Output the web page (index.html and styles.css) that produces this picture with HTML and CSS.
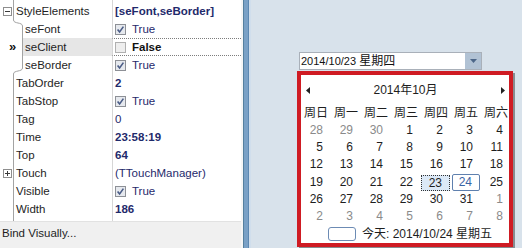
FILE: index.html
```html
<!DOCTYPE html>
<html>
<head>
<meta charset="utf-8">
<link rel="stylesheet" href="styles.css">
</head>
<body>
<div class="app">
  <div class="inspector">
    <div class="grid">
      <div class="row first">
        <div class="gutter"><svg class="exp" width="9" height="9" viewBox="0 0 9 9"><rect x=".5" y=".5" width="8" height="8" fill="#fff" stroke="#8e8e8e"/><path d="M2 4.5H7" stroke="#3a3a3a"/></svg></div>
        <div class="name">StyleElements</div>
        <div class="value bold">[seFont,seBorder]</div>
      </div>
      <div class="group">
        <div class="group-gutter">
          <svg class="bracket" width="23" height="54" viewBox="0 0 23 54"><path d="M13.5 0C13.5 4 22.5 2 22.5 6V48C22.5 52 13.5 50 13.5 54" fill="none" stroke="#a3a3a3"/></svg>
          <div class="markers"><span></span><span class="marker">»</span><span></span></div>
        </div>
        <div class="group-rows">
          <div class="row sub">
            <div class="name">seFont</div>
            <div class="value"><svg class="cb" width="11" height="11" viewBox="0 0 11 11"><rect x=".5" y=".5" width="10" height="10" fill="#e6e9ee" stroke="#8d9096"/><path d="M2.6 5.4L4.6 8L8.4 2.6" fill="none" stroke="#4a5c86" stroke-width="1.6"/></svg>True</div>
          </div>
          <div class="row sub selected">
            <div class="name">seClient</div>
            <div class="value plain-black bold"><svg class="cb" width="11" height="11" viewBox="0 0 11 11"><rect x=".5" y=".5" width="10" height="10" fill="#eeeeee" stroke="#b0b0b0"/></svg>False</div>
          </div>
          <div class="row sub">
            <div class="name">seBorder</div>
            <div class="value"><svg class="cb" width="11" height="11" viewBox="0 0 11 11"><rect x=".5" y=".5" width="10" height="10" fill="#e6e9ee" stroke="#8d9096"/><path d="M2.6 5.4L4.6 8L8.4 2.6" fill="none" stroke="#4a5c86" stroke-width="1.6"/></svg>True</div>
          </div>
        </div>
      </div>
      <div class="row">
        <div class="gutter"></div>
        <div class="name">TabOrder</div>
        <div class="value bold">2</div>
      </div>
      <div class="row">
        <div class="gutter"></div>
        <div class="name">TabStop</div>
        <div class="value"><svg class="cb" width="11" height="11" viewBox="0 0 11 11"><rect x=".5" y=".5" width="10" height="10" fill="#e6e9ee" stroke="#8d9096"/><path d="M2.6 5.4L4.6 8L8.4 2.6" fill="none" stroke="#4a5c86" stroke-width="1.6"/></svg>True</div>
      </div>
      <div class="row">
        <div class="gutter"></div>
        <div class="name">Tag</div>
        <div class="value">0</div>
      </div>
      <div class="row">
        <div class="gutter"></div>
        <div class="name">Time</div>
        <div class="value bold">23:58:19</div>
      </div>
      <div class="row">
        <div class="gutter"></div>
        <div class="name">Top</div>
        <div class="value bold">64</div>
      </div>
      <div class="row">
        <div class="gutter"><svg class="exp" width="9" height="9" viewBox="0 0 9 9"><rect x=".5" y=".5" width="8" height="8" fill="#fff" stroke="#8e8e8e"/><path d="M2 4.5H7M4.5 2V7" stroke="#3a3a3a"/></svg></div>
        <div class="name">Touch</div>
        <div class="value">(TTouchManager)</div>
      </div>
      <div class="row">
        <div class="gutter"></div>
        <div class="name">Visible</div>
        <div class="value"><svg class="cb" width="11" height="11" viewBox="0 0 11 11"><rect x=".5" y=".5" width="10" height="10" fill="#e6e9ee" stroke="#8d9096"/><path d="M2.6 5.4L4.6 8L8.4 2.6" fill="none" stroke="#4a5c86" stroke-width="1.6"/></svg>True</div>
      </div>
      <div class="row">
        <div class="gutter"></div>
        <div class="name">Width</div>
        <div class="value bold">186</div>
      </div>
      <div class="row filler">
        <div class="gutter"></div>
        <div class="name"></div>
        <div class="value"></div>
      </div>
    </div>
    <div class="bind">Bind Visually...</div>
  </div>
  <div class="splitter"></div>
  <div class="designer">
    <div class="combo">
      <span class="combo-text">2014/10/23 <span class="cjk">星期四</span></span>
      <span class="combo-btn"><svg width="7" height="4" viewBox="0 0 7 4"><path d="M0 0H7L3.5 4Z" fill="#4c6688"/></svg></span>
      <div class="popup">
        <div class="cal-head">
          <svg class="arr-l" width="4" height="7" viewBox="0 0 4 7"><path d="M4 0V7L0 3.5Z" fill="#222"/></svg>
          <span class="cal-title">2014年10月</span>
          <svg class="arr-r" width="4" height="7" viewBox="0 0 4 7"><path d="M0 0V7L4 3.5Z" fill="#222"/></svg>
        </div>
        <div class="weekdays">
          <span>周日</span><span>周一</span><span>周二</span><span>周三</span><span>周四</span><span>周五</span><span>周六</span>
        </div>
        <div class="days">
          <span class="other">28</span><span class="other">29</span><span class="other">30</span><span>1</span><span>2</span><span>3</span><span>4</span>
          <span>5</span><span>6</span><span>7</span><span>8</span><span>9</span><span>10</span><span>11</span>
          <span>12</span><span>13</span><span>14</span><span>15</span><span>16</span><span>17</span><span>18</span>
          <span>19</span><span>20</span><span>21</span><span>22</span><span class="sel">23</span><span class="today">24</span><span>25</span>
          <span>26</span><span>27</span><span>28</span><span>29</span><span>30</span><span>31</span><span class="other">1</span>
          <span class="other">2</span><span class="other">3</span><span class="other">4</span><span class="other">5</span><span class="other">6</span><span class="other">7</span><span class="other">8</span>
        </div>
        <div class="today-row">
          <span class="today-box"></span>
          <span class="today-text">今天: 2014/10/24 星期五</span>
        </div>
      </div>
    </div>
  </div>
</div>
</body>
</html>
```

FILE: styles.css
```css
html, body {
  margin: 0;
  padding: 0;
}
body {
  width: 522px;
  height: 248px;
  overflow: hidden;
  font-family: "Liberation Sans", "Noto Sans CJK SC", sans-serif;
  color: #1e1e1e;
}
.app {
  display: flex;
  height: 248px;
}

/* ---------- inspector ---------- */
.inspector {
  width: 241px;
  flex: none;
  display: flex;
  flex-direction: column;
  background: #fff;
}
.grid {
  height: 221px;
  display: flex;
  flex-direction: column;
  font-size: 11.5px;
}
.row {
  display: flex;
  height: 18px;
  flex: none;
}
.row > * {
  box-sizing: border-box;
}
.row.first {
  height: 20px;
}
.row.first > * {
  padding-top: 2px;
}
.row.filler {
  flex: 1;
  height: auto;
}
.gutter {
  width: 14px;
  border-right: 1px solid #a3a3a3;
  display: flex;
  align-items: center;
  padding-left: 3px;
}
.exp {
  display: block;
}
.name {
  width: 98px;
  padding-left: 2px;
  display: flex;
  align-items: center;
  white-space: nowrap;
  color: #1e1e1e;
}
.value {
  flex: 1;
  border-left: 1px solid #d6d6d6;
  padding-left: 2px;
  display: flex;
  align-items: center;
  white-space: nowrap;
  color: #1f2a6b;
}
.bold {
  font-weight: bold;
}
.plain-black {
  color: #111;
}
.cb {
  display: block;
  margin-right: 6px;
  flex: none;
}

.group {
  display: flex;
  height: 54px;
  flex: none;
}
.group-gutter {
  width: 23px;
  display: grid;
}
.bracket,
.markers {
  grid-area: 1 / 1;
}
.markers {
  display: flex;
  flex-direction: column;
}
.markers span {
  height: 18px;
}
.marker {
  font-weight: bold;
  font-size: 13px;
  line-height: 17px;
  padding-left: 9px;
  color: #111;
}
.group-rows {
  flex: 1;
  display: flex;
  flex-direction: column;
}
.row.sub .name {
  width: 89px;
}
.row.selected .name {
  background: #e6e6e6;
}
.row.selected .value {
  border-top: 1px dotted #7d7d7d;
  border-bottom: 1px dotted #7d7d7d;
}

.bind {
  flex: 1;
  background: #f0f0f0;
  border-top: 1px solid #e2e2e2;
  font-size: 11.5px;
  line-height: 14px;
  padding: 4px 2px 0;
  color: #1e1e1e;
}

/* ---------- splitter ---------- */
.splitter {
  width: 10px;
  flex: none;
  background: linear-gradient(to right,
    #f6f6f6 0, #f6f6f6 2px,
    #55809f 2px, #55809f 3px,
    #7aa1c6 3px, #7aa1c6 7px,
    #5d88b2 7px, #5d88b2 8px,
    #d0deec 8px, #d0deec 10px);
}

/* ---------- designer ---------- */
.designer {
  flex: 1;
  background: #d8e2eb;
  padding: 52px 0 0 48px;
}
.combo {
  position: relative;
  width: 183px;
  height: 18px;
  box-sizing: border-box;
  border: 1px solid #a9b0b9;
  background: #fff;
  display: flex;
}
.combo-text {
  flex: 1;
  padding-left: 1px;
  font-size: 11px;
  line-height: 16px;
  white-space: nowrap;
  color: #111;
}
.combo-text .cjk {
  font-size: 12px;
}
.combo-btn {
  width: 16px;
  background: #b1c2d4;
  display: flex;
  align-items: center;
  justify-content: center;
}

.popup {
  position: absolute;
  left: -3px;
  top: 18px;
  width: 216px;
  height: 176px;
  box-sizing: border-box;
  border: 4px solid #cf1b23;
  background: #fff;
  box-shadow: 2px 2px 0 rgba(70, 70, 70, 0.55);
  font-size: 12px;
  color: #1e1e1e;
}
.cal-head {
  margin-top: 6px;
  height: 18px;
  display: flex;
  align-items: center;
  padding: 0 4px 0 5px;
}
.cal-title {
  flex: 1;
  text-align: center;
  line-height: 18px;
}
.weekdays {
  margin-top: 5px;
  width: 210px;
  display: grid;
  grid-template-columns: repeat(7, 30px);
  height: 18px;
  line-height: 18px;
}
.weekdays span {
  text-align: center;
}
.days {
  width: 210px;
  display: grid;
  grid-template-columns: repeat(7, 30px);
  grid-auto-rows: 17.2px;
}
.days span {
  box-sizing: border-box;
  text-align: right;
  padding-right: 8px;
  line-height: 17px;
}
.days .other {
  color: #8a8a8a;
}
.days .sel {
  background: #dce9f7;
  border: 1px dotted #333;
  line-height: 15px;
  padding-right: 7px;
  margin: 1px 1px 0 0;
}
.days .today {
  border: 1px solid #5f80ae;
  border-radius: 2px;
  color: #3a64a3;
  line-height: 15px;
  padding-right: 7px;
  margin: 0 1px 0 1px;
}
.today-row {
  height: 18px;
  display: flex;
  align-items: center;
  padding-left: 27px;
}
.today-box {
  width: 28px;
  height: 14px;
  box-sizing: border-box;
  border: 1px solid #6c8bb4;
  border-radius: 3px;
  margin-right: 6px;
}
.today-text {
  line-height: 18px;
  white-space: nowrap;
}
```
